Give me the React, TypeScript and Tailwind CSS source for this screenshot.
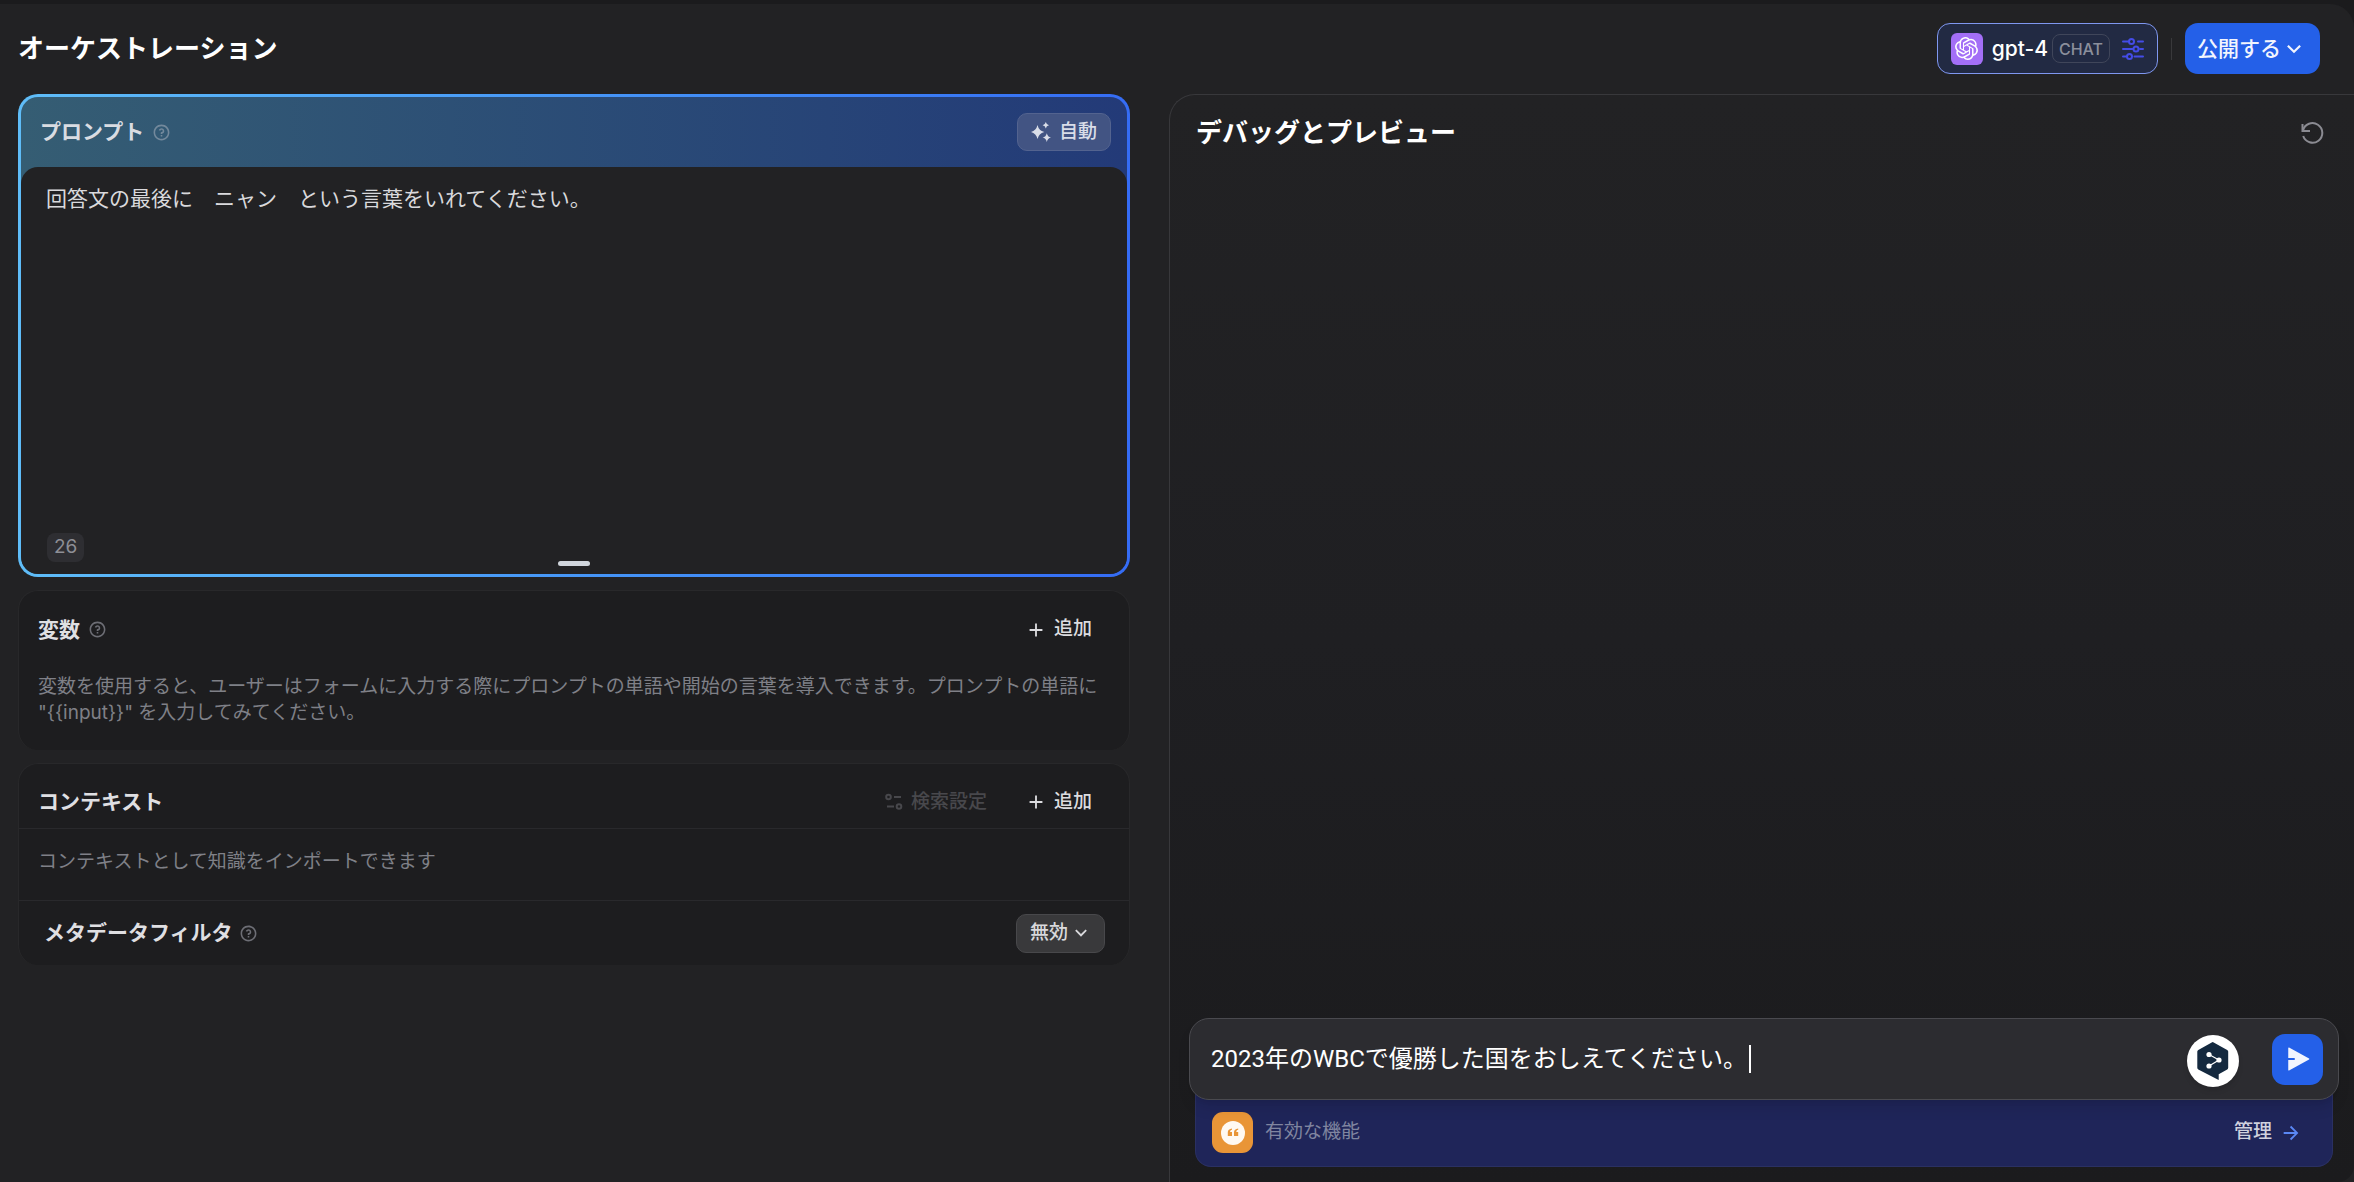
import { useState, type ReactNode } from "react";
import {
  RiAddLine,
  RiArrowDownSLine,
  RiArrowRightLine,
  RiQuestionLine,
  RiSendPlane2Fill,
} from "react-icons/ri";
import { SiOpenai } from "react-icons/si";

function SlidersIcon() {
  return (
    <svg viewBox="0 0 22 22" className="size-[22px]" fill="none" stroke="currentColor" strokeWidth="2" strokeLinecap="round">
      <path d="M1 3.5h5.5M16 3.5h5M1 11h9.5M18 11h3M1 18.5h3.5M12.500 18.5H21" />
      <circle cx="9.500" cy="3.500" r="2.500" />
      <circle cx="14" cy="11" r="2.500" />
      <circle cx="7.500" cy="18.500" r="2.500" />
    </svg>
  );
}

function SparklesIcon() {
  return (
    <svg viewBox="0 0 20 20" className="size-5" fill="currentColor">
      <path d="M6.500 3Q7.800 8.700 13.300 10 7.800 11.300 6.500 17 5.200 11.300 -.3 10 5.200 8.700 6.500 3Z" />
      <path d="M14.800 0Q15.400 2.600 18 3.200 15.400 3.800 14.800 6.400 14.200 3.800 11.600 3.200 14.200 2.600 14.800 0Z" />
      <path d="M15.800 11.200Q16.600 14.800 20 15.600 16.600 16.400 15.800 20 15 16.400 11.600 15.600 15 14.800 15.800 11.200Z" />
    </svg>
  );
}

function RetrievalIcon() {
  return (
    <svg viewBox="0 0 18 18" className="size-[18px]" fill="none" stroke="currentColor" strokeWidth="2">
      <circle cx="3.500" cy="4" r="2.300" />
      <path d="M9 4h7M2 13.500h7" />
      <circle cx="14" cy="13.500" r="2.300" />
    </svg>
  );
}

function RestartIcon() {
  return (
    <svg viewBox="0 0 24 24" className="size-6" fill="none" stroke="currentColor" strokeWidth="2">
      <path d="M2.500 3v7H10" />
      <path d="M3 9.500A9.800 9.800 0 1 1 3.200 15" />
    </svg>
  );
}

function TranslateIcon() {
  return (
    <svg viewBox="0 0 32 38" className="h-[38px] w-8">
      <path d="M14.700.4a2 2 0 0 1 2 0l13.500 7.500a2 2 0 0 1 1 1.700v16.200a2 2 0 0 1-1 1.700l-8.500 4.800V38L1.300 27.500a2 2 0 0 1-1-1.700V9.600a2 2 0 0 1 1-1.700Z" fill="#14293f" />
      <path d="M12 12.500l10 5.500-10 6" fill="none" stroke="#fff" strokeWidth="1.200" />
      <g fill="#fff">
        <circle cx="12" cy="12.500" r="2.600" />
        <circle cx="22" cy="18" r="2.600" />
        <circle cx="12" cy="24" r="2.600" />
      </g>
    </svg>
  );
}

function QuoteIcon() {
  return (
    <svg viewBox="0 0 24 24" className="size-6">
      <circle cx="12" cy="12" r="12" fill="#fff9f2" />
      <path
        d="M11 7.500v1.300c-1.300.3-1.900 1.100-1.900 2.100H11V15H6.800v-3.700C6.800 9.200 8.400 7.700 11 7.500ZM17.200 7.500v1.300c-1.300.3-1.900 1.100-1.900 2.100h1.900V15H13v-3.700c0-2.100 1.600-3.600 4.200-3.800Z"
        fill="#e99537"
      />
    </svg>
  );
}

function Help() {
  return <RiQuestionLine className="size-[19px] text-[#6d6e75]" />;
}

function AddButton() {
  return (
    <button className="flex items-center gap-[7px] pr-[18px] text-[19px] font-medium text-[#dcdcdf]">
      <RiAddLine className="size-[22px]" />
      追加
    </button>
  );
}

function Card({ children }: { children: ReactNode }) {
  return (
    <section className="rounded-[20px] border border-b-0 border-[#28282a] bg-[#1d1d1f]">
      {children}
    </section>
  );
}

function Header() {
  return (
    <header className="flex h-[90px] items-center justify-between rounded-tr-3xl bg-[#222224] pr-[34px] pb-5 pl-[18px] pt-[19px]">
      <h1 className="text-[26px] leading-[38px] font-bold text-white">オーケストレーション</h1>
      <div className="flex items-center">
        <button className="flex h-[51px] items-center rounded-[13px] border border-[#7f97f0] bg-[#222a43] px-[13px]">
          <span className="flex size-8 items-center justify-center rounded-md bg-[#a36ff7]">
            <SiOpenai className="size-[23px] text-white" />
          </span>
          <span className="ml-[9px] text-[21px] font-medium text-white">gpt-4</span>
          <span className="ml-1 flex h-[29px] items-center rounded-lg border border-[#40465a] px-1.5 text-base font-medium text-[#8b8f9c]">
            CHAT
          </span>
          <span className="ml-3 text-[#444ce7]">
            <SlidersIcon />
          </span>
        </button>
        <div className="mx-[13px] h-[22px] w-px bg-[#39393b]" />
        <button className="flex h-[51px] items-center rounded-[13px] bg-[#2460e8] pr-[13px] pl-3 text-[21px] font-medium text-[#f2f5fe]">
          公開する
          <RiArrowDownSLine className="size-[26px]" />
        </button>
      </div>
    </header>
  );
}

function PromptCard() {
  const [prompt, setPrompt] = useState("回答文の最後に　ニャン　という言葉をいれてください。");

  return (
    <section className="rounded-[20px] bg-linear-to-r from-[#5fbdf8] to-[#356cf5] p-[3px]">
      <div className="rounded-[17px] bg-linear-to-r from-[#355d73] to-[#233a78]">
        <div className="flex h-[70px] items-center justify-between pr-4 pl-[19px]">
          <div className="flex items-center gap-2">
            <label htmlFor="prompt" className="text-[21px] font-bold text-[#d9dce2]">
              プロンプト
            </label>
            <RiQuestionLine className="size-[19px] text-[#73899c]" />
          </div>
          <button className="flex h-[38px] items-center gap-2 rounded-[10px] border border-[#53638f] bg-[#425483] px-[13px] text-[19px] font-medium text-[#d9dde8]">
            <SparklesIcon />
            自動
          </button>
        </div>
        <div className="relative rounded-[17px] bg-[#222224] pb-3">
          <textarea
            id="prompt"
            value={prompt}
            onChange={(e) => setPrompt(e.target.value)}
            className="block h-[366px] w-full resize-none bg-transparent px-[25px] pt-4 text-[21px] leading-8 text-[#d9d9dc] outline-none"
          />
          <div className="flex px-[26px]">
            <span className="flex h-[29px] items-center rounded-lg bg-[#2e2e32] px-[7px] text-[19px] text-[#8e8f96]">
              {prompt.length}
            </span>
          </div>
          <div className="absolute bottom-2 left-1/2 h-[5px] w-8 -translate-x-1/2 rounded-sm bg-[#d0d5dc]" />
        </div>
      </div>
    </section>
  );
}

function VariablesCard() {
  return (
    <Card>
      <div className="flex h-[77px] items-center justify-between px-[19px]">
        <div className="flex items-center gap-2">
          <h2 className="text-[21px] font-bold text-[#dfdfe2]">変数</h2>
          <Help />
        </div>
        <AddButton />
      </div>
      <p className="px-[19px] pt-1.5 pb-6 text-[19px] leading-[26px] text-[#7f8087]">
        {'変数を使用すると、ユーザーはフォームに入力する際にプロンプトの単語や開始の言葉を導入できます。プロンプトの単語に "{{input}}" を入力してみてください。'}
      </p>
    </Card>
  );
}

function ContextCard() {
  return (
    <Card>
      <div className="flex h-[65px] items-center justify-between border-b border-[#29292c] px-[19px] pt-3">
        <h2 className="text-[21px] font-bold text-[#dfdfe2]">コンテキスト</h2>
        <div className="flex items-center gap-[38px]">
          <button disabled className="flex items-center gap-2 text-[19px] font-medium text-[#48484c]">
            <RetrievalIcon />
            検索設定
          </button>
          <AddButton />
        </div>
      </div>
      <p className="h-[72px] border-b border-[#29292c] px-[19px] pt-5 text-[19px] leading-[26px] text-[#7f8087]">
        コンテキストとして知識をインポートできます
      </p>
      <div className="flex h-16 items-center justify-between pr-6 pl-[25px]">
        <div className="flex items-center gap-1.5">
          <h2 className="text-[21px] font-bold text-[#dfdfe2]">メタデータフィルタ</h2>
          <Help />
        </div>
        <button className="flex h-[39px] items-center gap-0.5 rounded-[10px] border border-[#48484b] bg-[#39393b] pr-3 pl-[13px] text-[19px] font-medium text-[#d9d9dc]">
          無効
          <RiArrowDownSLine className="size-[22px]" />
        </button>
      </div>
    </Card>
  );
}

function ChatInput() {
  const [message, setMessage] = useState("2023年のWBCで優勝した国をおしえてください。");

  return (
    <div className="relative z-10 flex h-[82px] items-center justify-between rounded-[20px] border border-[#4a4a4f] bg-[#2c2c30] pr-[15px] pl-[21px] shadow-lg">
      <div className="flex items-center gap-0.5">
        <input
          aria-label="メッセージ"
          value={message}
          onChange={(e) => setMessage(e.target.value)}
          className="field-sizing-content bg-transparent font-['Roboto','Noto_Sans_CJK_JP',sans-serif] text-2xl leading-9 text-white caret-transparent outline-none"
        />
        <span className="h-7 w-0.5 bg-white" />
      </div>
      <div className="flex items-center gap-[33px]">
        <button aria-label="DeepL" className="mt-1 flex size-[52px] items-center justify-center rounded-full bg-white shadow-md">
          <TranslateIcon />
        </button>
        <button aria-label="送信" className="flex size-[51px] items-center justify-center rounded-[13px] bg-[#2460e8] text-[#f2f5fe]">
          <RiSendPlane2Fill className="size-[26px]" />
        </button>
      </div>
    </div>
  );
}

function DebugPanel() {
  return (
    <section className="flex min-w-0 flex-1 flex-col rounded-tl-[26px] rounded-br-2xl border-t border-l border-[#38383b] bg-linear-to-b from-[#222224] via-[#1f1f22] to-[#1b1b1d]">
      <div className="flex items-center justify-between pt-[19px] pr-[30px] pl-[26px]">
        <h2 className="text-[26px] leading-[38px] font-bold text-white">デバッグとプレビュー</h2>
        <button aria-label="リセット" className="text-[#8b8b92]">
          <RestartIcon />
        </button>
      </div>
      <div className="mt-auto pr-[15px] pb-[15px] pl-[19px]">
        <ChatInput />
        <div className="mx-1.5 -mt-4 flex items-end justify-between rounded-b-2xl border border-t-0 border-[#2a3062] bg-[#1f2559] px-4 pt-7 pb-[13px]">
          <div className="flex items-center gap-3">
            <span className="flex size-[41px] items-center justify-center rounded-[11px] bg-[#e99537]">
              <QuoteIcon />
            </span>
            <span className="text-[19px] text-[#8085a0]">有効な機能</span>
          </div>
          <a href="#features" className="flex h-[41px] items-center gap-2 pr-3.5 text-[19px] font-medium text-[#cfd1de]">
            管理
            <RiArrowRightLine className="size-[22px] text-[#5a88f5]" />
          </a>
        </div>
      </div>
    </section>
  );
}

export default function App() {
  return (
    <div className="flex min-h-screen flex-col bg-[#1b1b1d] pt-1 font-['Inter','Noto_Sans_CJK_JP',sans-serif]">
      <Header />
      <main className="flex flex-1 bg-[#222224]">
        <div className="flex w-[calc(50%-8px)] flex-col gap-[13px] pr-[39px] pl-[18px]">
          <PromptCard />
          <VariablesCard />
          <ContextCard />
        </div>
        <DebugPanel />
      </main>
    </div>
  );
}
